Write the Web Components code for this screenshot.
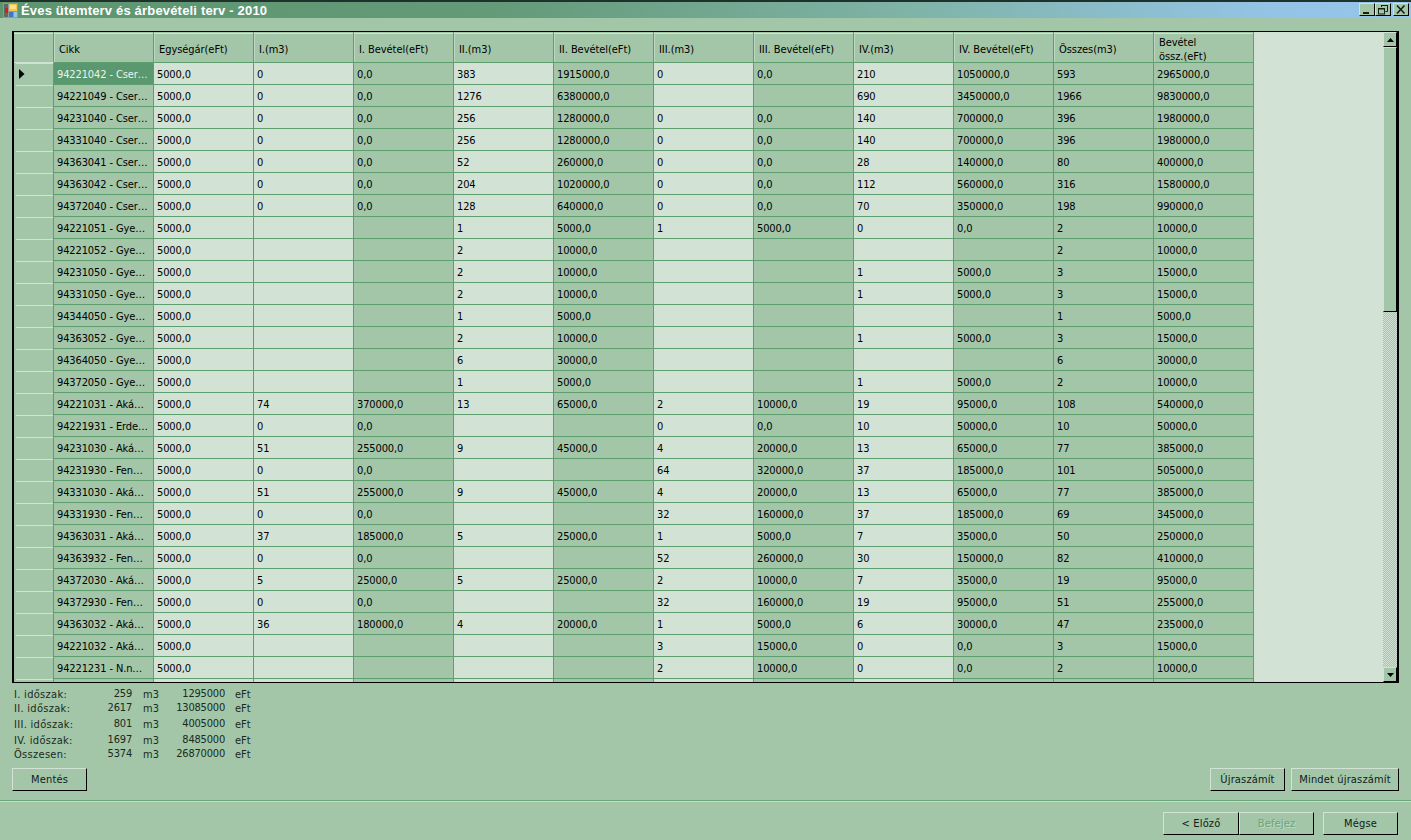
<!DOCTYPE html>
<html lang="hu"><head><meta charset="utf-8"><title>Éves ütemterv</title>
<style>
html,body{margin:0;padding:0;height:100%;overflow:hidden;background:#a3c6a8}
body{font:11px "DejaVu Sans Condensed","DejaVu Sans",sans-serif;color:#000}
</style></head><body>
<wiz-window>
  <title-bar slot="title">Éves ütemterv és árbevételi terv - 2010</title-bar>
  <data-grid></data-grid>
  <sum-table></sum-table>
  <div slot="actions-left"><flat-btn w="75">Mentés</flat-btn></div>
  <div slot="actions-right" style="display:flex;gap:6px"><flat-btn w="75">Újraszámít</flat-btn><flat-btn w="108">Mindet újraszámít</flat-btn></div>
  <div slot="footer" style="display:flex"><flat-btn w="76">&lt; Előző</flat-btn><flat-btn w="75" disabled>Befejez</flat-btn><flat-btn w="75" style="margin-left:9px">Mégse</flat-btn></div>
</wiz-window>
<script>
const FONT='"DejaVu Sans Condensed","DejaVu Sans",sans-serif';
customElements.define('wiz-window',class extends HTMLElement{constructor(){super();this.attachShadow({mode:'open'}).innerHTML=`
<style>
:host{display:flex;flex-direction:column;width:1411px;height:840px;overflow:hidden;background:#a3c6a8}
.main{padding:13px 12px 0 12px;display:flex;flex-direction:column}
.actions{display:flex;justify-content:space-between;margin-top:7px;height:23px}
.sep{margin-top:9px;height:1px;background:#6aa77a;border-bottom:1px solid #c6dccb}
.foot{display:flex;justify-content:flex-end;padding:10px 13px 0 0}
</style>
<slot name="title"></slot>
<div class="main"><slot></slot>
<div class="actions"><slot name="actions-left"></slot><slot name="actions-right"></slot></div></div>
<div class="sep"></div>
<div class="foot"><slot name="footer"></slot></div>`}});

customElements.define('title-bar',class extends HTMLElement{constructor(){super();this.attachShadow({mode:'open'}).innerHTML=`
<style>
:host{display:flex;align-items:center;height:16px;border-top:2px solid #20302a;background:linear-gradient(90deg,#5c9670 0%,#639a78 35%,#7fb4a8 65%,#93c4e6 90%,#95c6ea 100%);color:#fff;font:bold 13px "Liberation Sans",sans-serif;letter-spacing:.18px;padding-left:3px}
svg{flex:none;margin-right:3px}
.t{flex:1;white-space:nowrap}
.b{width:16px;height:13px;box-sizing:border-box;background:#a3c6a8;border:1px solid;border-color:#d2e3d5 #000 #000 #d2e3d5;display:flex;align-items:center;justify-content:center}
.wb{display:flex;margin-right:2px;align-self:flex-start;margin-top:1px}
</style>
<svg width="15" height="15" viewBox="0 0 15 15"><rect width="15" height="15" fill="#8f9a90"/><rect x="1" y="1" width="4" height="13" fill="#5f6a62"/><rect x="2" y="5" width="3" height="5" fill="#d02018"/><rect x="6" y="1" width="8" height="7" fill="#f6c64a"/><rect x="7" y="2" width="6" height="4" fill="#ffe28a"/><rect x="6" y="9" width="4" height="5" fill="#3c78c8"/><rect x="11" y="9" width="3" height="5" fill="#9cc0ea"/></svg>
<span class="t"><slot></slot></span>
<div class="wb">
<div class="b"><svg style="margin:0" width="14" height="11" viewBox="0 0 14 11"><rect x="3" y="8" width="6" height="2" fill="#142018"/></svg></div>
<div class="b"><svg style="margin:0" width="14" height="11" viewBox="0 0 14 11" fill="none" stroke="#142018"><path d="M5.5 3V1.5h6v6H9.5"/><path d="M5 1.5h7" stroke-width="1"/><rect x="2.5" y="4.5" width="6" height="5.5"/><path d="M2 5h7"/></svg></div>
<div class="b" style="margin-left:2px"><svg style="margin:0" width="14" height="11" viewBox="0 0 14 11" fill="none" stroke="#142018" stroke-width="1.6"><path d="M3 1.5l7.5 8M10.5 1.5l-7.5 8"/></svg></div>
</div>`}});

customElements.define('flat-btn',class extends HTMLElement{static get observedAttributes(){return['w']}
constructor(){super();this.attachShadow({mode:'open'}).innerHTML=`
<style>
:host{display:flex;align-items:center;justify-content:center;box-sizing:border-box;height:23px;background:#a3c6a8;border:1px solid;border-color:#d2e3d5 #000 #000 #d2e3d5;font:11px ${FONT};color:#10201a;letter-spacing:.15px;padding-bottom:1px}
:host([disabled]){color:#6ea47c;text-shadow:1px 1px 0 #bcd8c2}
</style><slot></slot>`}
attributeChangedCallback(n,o,v){this.style.width=v+'px'}});

const ROWS=`94221042 - Cser…|0|0,0|383|1915000,0|0|0,0|210|1050000,0|593|2965000,0
94221049 - Cser…|0|0,0|1276|6380000,0|||690|3450000,0|1966|9830000,0
94231040 - Cser…|0|0,0|256|1280000,0|0|0,0|140|700000,0|396|1980000,0
94331040 - Cser…|0|0,0|256|1280000,0|0|0,0|140|700000,0|396|1980000,0
94363041 - Cser…|0|0,0|52|260000,0|0|0,0|28|140000,0|80|400000,0
94363042 - Cser…|0|0,0|204|1020000,0|0|0,0|112|560000,0|316|1580000,0
94372040 - Cser…|0|0,0|128|640000,0|0|0,0|70|350000,0|198|990000,0
94221051 - Gye…|||1|5000,0|1|5000,0|0|0,0|2|10000,0
94221052 - Gye…|||2|10000,0|||||2|10000,0
94231050 - Gye…|||2|10000,0|||1|5000,0|3|15000,0
94331050 - Gye…|||2|10000,0|||1|5000,0|3|15000,0
94344050 - Gye…|||1|5000,0|||||1|5000,0
94363052 - Gye…|||2|10000,0|||1|5000,0|3|15000,0
94364050 - Gye…|||6|30000,0|||||6|30000,0
94372050 - Gye…|||1|5000,0|||1|5000,0|2|10000,0
94221031 - Aká…|74|370000,0|13|65000,0|2|10000,0|19|95000,0|108|540000,0
94221931 - Erde…|0|0,0|||0|0,0|10|50000,0|10|50000,0
94231030 - Aká…|51|255000,0|9|45000,0|4|20000,0|13|65000,0|77|385000,0
94231930 - Fen…|0|0,0|||64|320000,0|37|185000,0|101|505000,0
94331030 - Aká…|51|255000,0|9|45000,0|4|20000,0|13|65000,0|77|385000,0
94331930 - Fen…|0|0,0|||32|160000,0|37|185000,0|69|345000,0
94363031 - Aká…|37|185000,0|5|25000,0|1|5000,0|7|35000,0|50|250000,0
94363932 - Fen…|0|0,0|||52|260000,0|30|150000,0|82|410000,0
94372030 - Aká…|5|25000,0|5|25000,0|2|10000,0|7|35000,0|19|95000,0
94372930 - Fen…|0|0,0|||32|160000,0|19|95000,0|51|255000,0
94363032 - Aká…|36|180000,0|4|20000,0|1|5000,0|6|30000,0|47|235000,0
94221032 - Aká…|||||3|15000,0|0|0,0|3|15000,0
94221231 - N.n…|||||2|10000,0|0|0,0|2|10000,0
|||||||||||`.split('\n').map(r=>r.split('|'));
const HEAD=['Cikk','Egységár(eFt)','I.(m3)','I. Bevétel(eFt)','II.(m3)','II. Bevétel(eFt)','III.(m3)','III. Bevétel(eFt)','IV.(m3)','IV. Bevétel(eFt)','Összes(m3)','Bevétel<br>össz.(eFt)'];
const DARK=[1,0,0,1,0,1,0,1,0,1,1,1];
customElements.define('data-grid',class extends HTMLElement{constructor(){super();
let h='<div class="rh hd"></div>'+HEAD.map(t=>`<div class="hc"><span>${t}</span></div>`).join('');
ROWS.forEach((r,i)=>{
 h+=`<div class="rh">${i==0?'<svg width="6" height="10" viewBox="0 0 6 10"><path d="M0 0l5.5 5L0 10z" fill="#000"/></svg>':''}</div>`;
 h+=`<div class="c d${i==0?' sel':''}">${r[0]}</div><div class="c">${i==28?'':'5000,0'}</div>`;
 for(let k=1;k<11;k++) h+=`<div class="c${DARK[k+1]?' d':''}">${r[k]||''}</div>`;
});
this.attachShadow({mode:'open'}).innerHTML=`
<style>
:host{display:flex;box-sizing:border-box;width:1387px;height:652px;border:solid #000;border-width:1px 2px 1px 2px;background:#d2e3d5;font:11px ${FONT};color:#000;letter-spacing:-.12px}
.view{flex:1;overflow:hidden;min-width:0}
.g{display:grid;grid-template-columns:40px repeat(12,100px);grid-auto-rows:22px;grid-template-rows:31px;width:1240px}
.c,.rh,.hc{box-sizing:border-box;border-bottom:1px solid #5f9e6e;white-space:nowrap;overflow:hidden}
.c{border-right:1px solid #5f9e6e;padding:2px 0 0 3px;line-height:20px}
.d{background:#a3c6a8}
.sel{background:#5a9870;color:#e9f4ec}
.rh{background:#a3c6a8;border-right:1px solid #5f9e6e;border-bottom:0;background-image:linear-gradient(#cfe2d3,#cfe2d3);background-size:100% 1px;background-repeat:no-repeat;background-position:2px 0;padding:6px 0 0 5px}
.rh.hd{background-position:0 1px;border-bottom:1px solid #cfe2d3}
.rh svg{display:block}
.hc{background:#a3c6a8;border-right:1px solid #5f9e6e;padding:6px 0 0 5px;display:flex;align-items:center;line-height:14px;letter-spacing:-.06px;background-image:linear-gradient(#cfe2d3,#cfe2d3);background-size:100% 1px;background-repeat:no-repeat;background-position:0 1px;box-shadow:inset 1px 0 0 #bcd6c2}
.sb{flex:none;width:14px;display:flex;flex-direction:column;background:repeating-conic-gradient(#d2e3d5 0 25%,#a3c6a8 0 50%) 0 0/2px 2px}
.btn{box-sizing:border-box;height:15px;flex:none;background:#a3c6a8;border:1px solid;border-color:#d2e3d5 #000 #000 #d2e3d5;display:flex;align-items:center;justify-content:center}
.th{height:265px}.sp{flex:1}
</style>
<div class="view"><div class="g">${h}</div></div>
<div class="sb"><div class="btn"><svg width="7" height="4" viewBox="0 0 7 4"><path d="M3.5 0L7 4H0z" fill="#000"/></svg></div><div class="btn th"></div><div class="sp"></div><div class="btn"><svg width="7" height="4" viewBox="0 0 7 4"><path d="M0 0h7L3.5 4z" fill="#000"/></svg></div></div>`}});

customElements.define('sum-table',class extends HTMLElement{constructor(){super();
const d=[['I. időszak:','259','1295000',14],['II. időszak:','2617','13085000',15],['III. időszak:','801','4005000',16],['IV. időszak:','1697','8485000',16],['Összesen:','5374','26870000',13]];
let h='';d.forEach(r=>{h+=`<div class="row" style="height:${r[3]}px"><span class="l">${r[0]}</span><span class="n a">${r[1]}</span><span class="u">m3</span><span class="n b">${r[2]}</span><span class="u e">eFt</span></div>`});
this.attachShadow({mode:'open'}).innerHTML=`
<style>
:host{display:block;margin-top:4px;height:74px;font:11px ${FONT};color:#1a2a20;padding-left:2px}
.row{display:flex;align-items:center;white-space:nowrap}
.l{width:80px;letter-spacing:.3px}.n{text-align:right;margin-bottom:2px;letter-spacing:-.2px}
.a{width:38px}.b{width:60px}
.u{margin-left:11px;width:22px}.e{margin-left:10px}
</style>${h}`}});
</script>
</body></html>
